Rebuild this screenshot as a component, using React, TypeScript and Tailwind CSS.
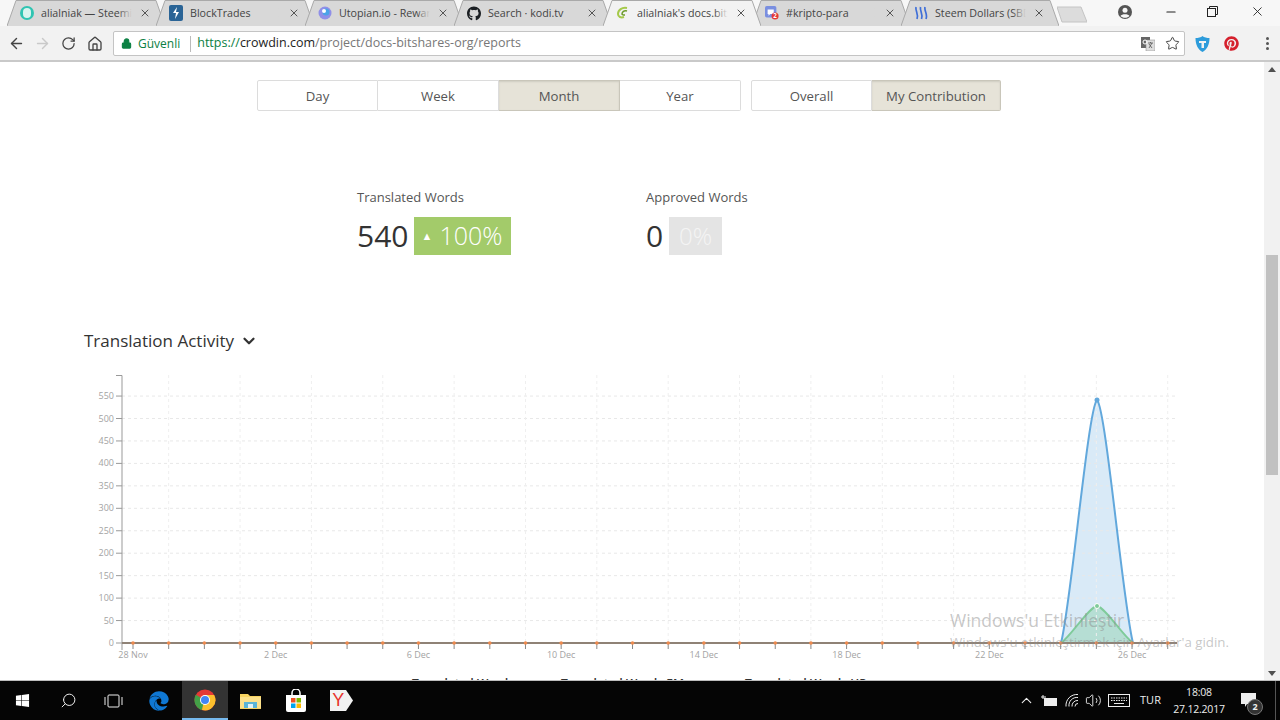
import React from 'react';
import { ArrowLeft, ArrowRight, RotateCw, Home, Lock, Star, X, Minus, Search, ChevronDown, ChevronUp, Volume2 } from 'lucide-react';
import { FaEdge, FaGithub, FaPinterest, FaWindows } from 'react-icons/fa';

const SANS = "font-['Open_Sans','Noto_Sans',sans-serif]";

// favicons for the browser tabs
const SteemIcon = () => (
  <div className="w-[14px] h-[14px] rounded-full bg-[#2fc4b2] flex items-center justify-center">
    <div className="w-[8px] h-[10px] rounded-full bg-[#d8f4ef]" />
  </div>
);
const BlockIcon = () => (
  <svg width="14" height="16" viewBox="0 0 14 16">
    <rect width="14" height="16" rx="2" fill="#2a6496" />
    <path d="M8 2L4 8h3l-1 6 4-7H7z" fill="#fff" />
  </svg>
);
const UtopianIcon = () => (
  <svg width="14" height="14" viewBox="0 0 14 14">
    <circle cx="7" cy="7" r="6.5" fill="#8f8fe8" />
    <circle cx="8" cy="6" r="3.5" fill="#4aa3e8" />
    <circle cx="6" cy="5" r="2" fill="#fff" />
  </svg>
);
const CrowdinIcon = () => (
  <svg width="14" height="14" viewBox="0 0 14 14" fill="none">
    <path d="M11 2C6 1 2 4 2 8c0 3 3 4 6 3" stroke="#a5c94a" strokeWidth="2" />
    <path d="M11 5C8 4 6 6 6 8c0 1 2 1 3 1" stroke="#6c9b2a" strokeWidth="1.5" />
  </svg>
);
const ChatIcon = () => (
  <svg width="16" height="16" viewBox="0 0 16 16">
    <rect width="13" height="13" rx="2" fill="#7a8fe0" />
    <path d="M3 4h7v5H6l-2 2V9H3z" fill="#fff" />
    <circle cx="11.5" cy="11.5" r="4" fill="#e53935" />
    <text x="11.5" y="14" fontSize="7" fontWeight="700" fill="#fff" textAnchor="middle">2</text>
  </svg>
);
const SteemDollarIcon = () => (
  <svg width="14" height="14" viewBox="0 0 14 14" fill="none" stroke="#3f6fd8" strokeWidth="1.7">
    <path d="M2 1c-1 4 3 7 1 12" />
    <path d="M6.5 1c-1 4 3 7 1 12" />
    <path d="M11 1c-1 4 3 7 1 12" />
  </svg>
);

const tabs = [
  { title: 'alialniak — Steemit', icon: <SteemIcon /> },
  { title: 'BlockTrades', icon: <BlockIcon /> },
  { title: 'Utopian.io - Rewards', icon: <UtopianIcon /> },
  { title: 'Search · kodi.tv', icon: <FaGithub size={15} color="#1b1f23" /> },
  { title: "alialniak's docs.bitshares", icon: <CrowdinIcon />, active: true },
  { title: '#kripto-para', icon: <ChatIcon /> },
  { title: 'Steem Dollars (SBD)', icon: <SteemDollarIcon /> },
];

const Tab = ({ title, icon, active }: { title: string; icon: React.ReactNode; active?: boolean }) => (
  <div className={`relative w-[158px] h-[26px] -mr-[9px] shrink-0 ${active ? 'z-10' : ''}`}>
    <svg className="absolute inset-0" width="158" height="26" viewBox="0 0 158 26">
      <path
        d="M0 26 L9 0.5 H149 L158 26"
        fill={active ? '#f2f2f2' : '#d8d8d8'}
        stroke="#a9a9a9"
        strokeWidth="1"
      />
    </svg>
    <div className="relative flex items-center h-full pl-[13px]">
      <div className="w-[14px] flex justify-center shrink-0">{icon}</div>
      <div className={`relative ml-[7px] w-[91px] overflow-hidden whitespace-nowrap text-[10.7px] text-[#444] ${SANS}`}>
        {title}
        <div className={`absolute right-0 top-0 bottom-0 w-[14px] bg-linear-to-l to-transparent ${active ? 'from-[#f2f2f2]' : 'from-[#d8d8d8]'}`} />
      </div>
      <X size={12} strokeWidth={2} className="ml-[7px] text-[#555]" />
    </div>
  </div>
);

const TabStrip = () => (
  <div className="h-[26px] flex pl-[7px] bg-[#f7f7f7] relative">
    {tabs.map((t) => (
      <Tab key={t.title} {...t} />
    ))}
    <svg className="ml-[7px] mt-[6px]" width="30" height="17" viewBox="0 0 30 17">
      <path d="M0 1H24L30 16H5z" fill="#dcdcdc" stroke="#c4c4c4" />
    </svg>
    <div className="ml-auto flex items-center h-full pr-[15px]">
      <svg width="14" height="14" viewBox="0 0 14 14" className="mr-[32px] mb-[3px]">
        <circle cx="7" cy="7" r="7" fill="#555" />
        <circle cx="7" cy="5.2" r="2.5" fill="#f7f7f7" />
        <path d="M2.5 11c1-2.5 8-2.5 9 0-2 2.4-7 2.4-9 0z" fill="#f7f7f7" />
      </svg>
      <Minus size={14} className="text-[#222] mr-[29px] mb-[3px]" />
      <svg width="11" height="11" viewBox="0 0 11 11" fill="none" stroke="#222" className="mr-[32px] mb-[3px]">
        <rect x="0.5" y="2.5" width="8" height="8" />
        <path d="M2.5 2.5v-2h8v8h-2" />
      </svg>
      <X size={15} strokeWidth={1.4} className="text-[#222] mb-[3px]" />
    </div>
  </div>
);

const Toolbar = () => (
  <div className="h-[36px] bg-[#f2f2f2] border-b-2 border-[#c9c9c9] flex items-start pt-[5px]">
    <div className="w-[113px] h-[25px] flex items-center pl-[8px] shrink-0">
      <ArrowLeft size={17} strokeWidth={2} className="text-[#444]" />
      <ArrowRight size={17} strokeWidth={2} className="ml-[9px] text-[#c9c9c9]" />
      <RotateCw size={15} strokeWidth={2} className="ml-[10px] text-[#444]" />
      <Home size={16} strokeWidth={2} className="ml-[11px] text-[#444]" />
    </div>
    <div className={`w-[1072px] h-[25px] bg-white border border-[#c4c4c4] rounded-[2px] flex items-center pl-[7px] text-[12.5px] ${SANS}`}>
      <Lock size={11} fill="#0b8043" className="text-[#0b8043]" strokeWidth={2.4} />
      <span className="ml-[6px] text-[12px] text-[#0b8043]">Güvenli</span>
      <span className="ml-[10px] w-px h-[16px] bg-[#bbb]" />
      <span className="ml-[6px] whitespace-nowrap">
        <span className="text-[#0b8043]">https://</span>
        <span className="text-[#222]">crowdin.com</span>
        <span className="text-[#777]">/project/docs-bitshares-org/reports</span>
      </span>
      <div className="ml-auto flex items-center pr-[4px]">
        <svg width="14" height="14" viewBox="0 0 14 14" className="mr-[10px]">
          <rect x="0" y="0" width="9" height="11" fill="#666" />
          <rect x="5" y="3" width="9" height="11" fill="#ddd" stroke="#888" strokeWidth="0.5" />
          <path d="M7 6h5M9.5 5v1M8 11l3-5M8 7l3 4" stroke="#555" strokeWidth="0.8" />
          <circle cx="4" cy="5" r="2" fill="none" stroke="#fff" />
        </svg>
        <Star size={15} strokeWidth={1.6} className="text-[#444]" />
      </div>
    </div>
    <div className="h-[25px] flex items-center pl-[10px]">
      <svg width="15" height="16" viewBox="0 0 15 16">
        <path d="M0.5 2C3 2 6 1.5 7.5 0 9 1.500 12 2 14.500 2 14.500 9 12 13.500 7.500 16 3 13.500 0.500 9 0.500 2z" fill="#2d9cdb" />
        <path d="M4 5h7v2H9v5H6.500V7H4z" fill="#f2f2f2" />
      </svg>
      <FaPinterest size={15} color="#d5202d" className="ml-[14px]" />
      <div className="ml-[27px] flex flex-col gap-[2px]">
        <div className="w-[3px] h-[3px] rounded-full bg-[#555]" />
        <div className="w-[3px] h-[3px] rounded-full bg-[#555]" />
        <div className="w-[3px] h-[3px] rounded-full bg-[#555]" />
      </div>
    </div>
  </div>
);

const FilterButton = ({ label, active, className }: { label: string; active?: boolean; className: string }) => (
  <div
    className={`h-[31px] pt-[2px] flex items-center justify-center border text-[13.2px] text-[#555] ${
      active ? 'bg-[#e6e3d8] border-[#c9c6ba] shadow-[inset_0_1px_2px_rgba(0,0,0,0.1)]' : 'bg-white border-[#dcdcdc]'
    } ${className}`}
  >
    {label}
  </div>
);

const Filters = () => (
  <div className="flex pl-[257px]">
    <FilterButton label="Day" className="w-[121px] rounded-l-[2px]" />
    <FilterButton label="Week" className="w-[121px] border-l-0" />
    <FilterButton label="Month" active className="w-[121px] border-l-0" />
    <FilterButton label="Year" className="w-[121px] border-l-0 rounded-r-[2px]" />
    <FilterButton label="Overall" className="w-[121px] ml-[10px] rounded-l-[2px]" />
    <FilterButton label="My Contribution" active className="w-[129px] border-l-0 rounded-r-[2px]" />
  </div>
);

const Stats = () => (
  <div className="flex pl-[357px] mt-[77px]">
    <div className="w-[289px]">
      <div className="h-[18px] leading-[18px] text-[13px] text-[#555]">Translated Words</div>
      <div className="mt-[11px] flex items-center h-[38px]">
        <span className="text-[30px] text-[#333] leading-none">540</span>
        <span className="ml-[6px] w-[97px] h-[38px] pr-[2px] bg-[#a3cb6a] flex items-center justify-center text-white text-[25px] font-light">
          <span className="text-[11px] mr-[7px]">▲</span>100%
        </span>
      </div>
    </div>
    <div>
      <div className="h-[18px] leading-[18px] text-[13px] text-[#555]">Approved Words</div>
      <div className="mt-[11px] flex items-center h-[38px]">
        <span className="text-[30px] text-[#333] leading-none">0</span>
        <span className="ml-[6px] w-[53px] h-[38px] bg-[#e4e4e4] flex items-center justify-center text-[#f4f4f4] text-[24px] font-light">0%</span>
      </div>
    </div>
  </div>
);

const dayX = (d: number) => 133 + d * 35.68;
const valY = (v: number) => 643 - (v / 50) * 22.45;

const BLUE_EDGE = 'M1061 643C1071 605 1088 408 1097 400C1106 408 1123 605 1133 643';
const GREEN_EDGE = 'M1061 643C1072 635 1088 608 1097 606C1106 608 1122 635 1133 643';

const ActivityChart = () => {
  const days = Array.from({ length: 30 }, (_, i) => i);
  const yVals = Array.from({ length: 12 }, (_, i) => i * 50);
  const xLabels = ['28 Nov', '2 Dec', '6 Dec', '10 Dec', '14 Dec', '18 Dec', '22 Dec', '26 Dec'];
  return (
    <svg className="block mt-[17px]" width="1264" height="290" viewBox="0 370 1264 290">
      <path d={`${BLUE_EDGE}Z`} fill="#62a8dc" fillOpacity="0.24" />
      <path d={`${GREEN_EDGE}Z`} fill="#7fcb9a" fillOpacity="0.38" />
      {yVals.slice(1).map((v) => (
        <line key={v} x1="122" x2="1176" y1={valY(v)} y2={valY(v)} stroke="#e8e8e8" strokeDasharray="3 3" />
      ))}
      {days.filter((d) => d % 2 === 1).map((d) => (
        <line key={d} x1={dayX(d)} x2={dayX(d)} y1="375" y2="643" stroke="#efefef" strokeDasharray="3 3" />
      ))}
      {yVals.map((v) => (
        <g key={v}>
          <line x1="116" x2="122" y1={valY(v)} y2={valY(v)} stroke="#999" />
          <text x="114" y={valY(v) + 3} fontSize="9" fill="#a3a3a3" textAnchor="end" fontFamily="Open Sans">{v}</text>
        </g>
      ))}
      <path d="M116 375.500H122V650" fill="none" stroke="#999" />
      <path d={BLUE_EDGE} fill="none" stroke="#62a8dc" strokeWidth="2" />
      <path d={GREEN_EDGE} fill="none" stroke="#7fcb9a" strokeWidth="1.8" />
      <circle cx="1097" cy="400" r="2.500" fill="#62a8dc" />
      <circle cx="1097" cy="606" r="2.500" fill="#7fcb9a" stroke="#fff" />
      <line x1="122" x2="1177" y1="643" y2="643" stroke="#8f8276" strokeWidth="1.8" />
      {days.map((d) => (
        <g key={d}>
          <line x1={dayX(d)} x2={dayX(d)} y1="643" y2="649" stroke="#888" />
          <circle cx={dayX(d)} cy="643" r="1.800" fill="#ee8a4e" />
        </g>
      ))}
      {xLabels.map((l, i) => (
        <text key={l} x={dayX(i * 4)} y="658" fontSize="9" fill="#a3a3a3" textAnchor="middle" fontFamily="Open Sans">{l}</text>
      ))}
    </svg>
  );
};

const ChevronTriangle = ({ up }: { up?: boolean }) => (
  <svg width="16" height="14" viewBox="0 0 16 14">
    <path d={up ? 'M4 10L8 5l4 5z' : 'M4 5h8l-4 5z'} fill="#505050" />
  </svg>
);

const Scrollbar = () => (
  <div className="w-[16px] bg-[#f1f1f1] flex flex-col items-center shrink-0">
    <ChevronTriangle up />
    <div className="mt-[179px] w-[12px] h-[220px] bg-[#c1c1c1]" />
    <div className="mt-auto"><ChevronTriangle /></div>
  </div>
);

const ChromeLogo = () => (
  <svg width="22" height="22" viewBox="0 0 22 22">
    <circle cx="11" cy="11" r="10.500" fill="#e53935" />
    <path d="M11 11L1.800 5.800A10.500 10.500 0 0 0 8 21.100z" fill="#43a047" />
    <path d="M11 6h9.100A10.500 10.500 0 0 1 8 21.100z" fill="#fbc02d" />
    <circle cx="11" cy="11" r="5" fill="#fff" />
    <circle cx="11" cy="11" r="4" fill="#4285f4" />
  </svg>
);

const FolderLogo = () => (
  <svg width="21" height="18" viewBox="0 0 21 18">
    <path d="M0 2h8l2 2h11v13H0z" fill="#f6d25f" />
    <rect y="5" width="21" height="11" fill="#fbe08a" />
    <rect x="4" y="10" width="13" height="6" fill="#5ab4d6" />
    <rect x="8" y="12" width="5" height="4" fill="#e0f2f8" />
  </svg>
);

const StoreLogo = () => (
  <svg width="22" height="24" viewBox="0 0 22 24">
    <path d="M7 7V4a4 4 0 0 1 8 0v3" fill="none" stroke="#fff" strokeWidth="1.500" />
    <path d="M1 6h20v15a2 2 0 0 1-2 2H3a2 2 0 0 1-2-2z" fill="#fff" />
    <rect x="6" y="9" width="4.500" height="4.500" fill="#f25022" />
    <rect x="11.500" y="9" width="4.500" height="4.500" fill="#7fba00" />
    <rect x="6" y="14.500" width="4.500" height="4.500" fill="#00a4ef" />
    <rect x="11.500" y="14.500" width="4.500" height="4.500" fill="#ffb900" />
  </svg>
);

const YandexLogo = () => (
  <div className="relative w-[23px] h-[23px] flex items-center justify-center">
    <svg className="absolute inset-0" width="23" height="23" viewBox="0 0 23 23">
      <path d="M0 1H16L23 11.500 16 22H0z" fill="#f2f2f2" />
    </svg>
    <span className="relative text-[#e8322b] text-[18px] font-['Liberation_Sans',sans-serif] -ml-[6px]">Y</span>
  </div>
);

const WinTask = ({ children, active }: { children: React.ReactNode; active?: boolean }) => (
  <div className={`w-[45.500px] h-[39px] flex items-center justify-center shrink-0 ${active ? 'bg-[#333] border-b-2 border-[#76b9ed]' : ''}`}>
    {children}
  </div>
);

const TrayItem = ({ className, children }: { className: string; children: React.ReactNode }) => (
  <div className={`flex items-center justify-center ${className}`}>{children}</div>
);

const Taskbar = () => (
  <div className="h-[39px] bg-[#050505] border-t border-[#bdbdbd] box-content flex items-center text-[#eee] shrink-0">
    <WinTask><FaWindows size={15} color="#fff" /></WinTask>
    <WinTask><Search size={17} strokeWidth={1.4} color="#eee" className="-scale-x-100" /></WinTask>
    <WinTask>
      <svg width="19" height="14" viewBox="0 0 19 14" fill="none" stroke="#eee">
        <rect x="4" y="1" width="11" height="12" rx="1" />
        <path d="M1 3v8M18 3v8" />
      </svg>
    </WinTask>
    <WinTask><FaEdge size={20} color="#0f78d4" /></WinTask>
    <WinTask active><ChromeLogo /></WinTask>
    <WinTask><FolderLogo /></WinTask>
    <WinTask><StoreLogo /></WinTask>
    <WinTask><YandexLogo /></WinTask>
    <div className="ml-auto flex items-center h-full">
      <TrayItem className="w-[24px]"><ChevronUp size={17} strokeWidth={1.6} /></TrayItem>
      <TrayItem className="w-[22px]">
        <svg width="16" height="12" viewBox="0 0 16 12" fill="none" stroke="#eee">
          <rect x="3.500" y="3.500" width="12" height="7" fill="#eee" />
          <path d="M0 2h5M2 0v4" />
        </svg>
      </TrayItem>
      <TrayItem className="w-[23px]">
        <svg width="14" height="13" viewBox="0 0 14 13" fill="none" stroke="#eee">
          <path d="M1 12.500a11 11 0 0 1 12-12M4 12.500a8 8 0 0 1 9-9M7 12.500a5.500 5.500 0 0 1 6-6M10 12.500a3 3 0 0 1 3-3" />
        </svg>
      </TrayItem>
      <TrayItem className="w-[21px]"><Volume2 size={17} strokeWidth={1.3} /></TrayItem>
      <TrayItem className="w-[29px]">
        <svg width="22" height="13" viewBox="0 0 22 13" fill="none" stroke="#eee">
          <rect x="0.500" y="0.500" width="21" height="12" />
          <path d="M3 4h16M3 6.500h16" strokeDasharray="1.500 1" />
          <path d="M6 9.500h10" />
        </svg>
      </TrayItem>
      <TrayItem className={`w-[35px] text-[11px] ${SANS}`}>TUR</TrayItem>
      <div className={`w-[62px] flex flex-col items-center text-[10.5px] tracking-[-0.2px] leading-[16.5px] ${SANS}`}>
        <span>18:08</span>
        <span>27.12.2017</span>
      </div>
      <div className="relative ml-[11px] w-[34px] h-[39px]">
        <svg width="16" height="15" viewBox="0 0 16 15" className="mt-[12px]">
          <path d="M0 0h15v11H6l-2 3v-3H0z" fill="#eee" />
        </svg>
        <div className={`absolute left-[6px] top-[18px] w-[16px] h-[16px] rounded-full bg-[#333] border border-[#777] flex items-center justify-center text-[9px] font-bold ${SANS}`}>2</div>
      </div>
      <div className="w-px h-full bg-[#555]" />
      <div className="w-[4px]" />
    </div>
  </div>
);

export default function App() {
  return (
    <div className={`w-[1280px] h-[720px] overflow-hidden flex flex-col bg-white ${SANS}`}>
      <TabStrip />
      <Toolbar />
      <div className="flex flex-1 min-h-0">
        <div className="relative flex-1 overflow-hidden pt-[18px]">
          <Filters />
          <Stats />
          <div className="mt-[74px] pl-[84px] h-[24px] flex items-center text-[17px] text-[#333] font-medium">
            Translation Activity
            <ChevronDown size={18} strokeWidth={3} className="ml-[6px]" />
          </div>
          <ActivityChart />
          <div className="flex pl-[412px] text-[12px] font-semibold text-[#333] mt-[15px] whitespace-nowrap">
            <span className="w-[149px]">Translated Words</span>
            <span className="w-[184px]">Translated Words EM</span>
            <span>Translated Words UP</span>
          </div>
          {/* activation watermark */}
          <div className="absolute left-[950px] top-[546px] text-[#8f8f8f]/50 whitespace-nowrap">
            <div className="text-[17.5px] leading-[24px]">Windows'u Etkinleştir</div>
            <div className="text-[13.3px] leading-[18px] mt-[1px]">Windows'u etkinleştirmek için Ayarlar'a gidin.</div>
          </div>
        </div>
        <Scrollbar />
      </div>
      <Taskbar />
    </div>
  );
}
